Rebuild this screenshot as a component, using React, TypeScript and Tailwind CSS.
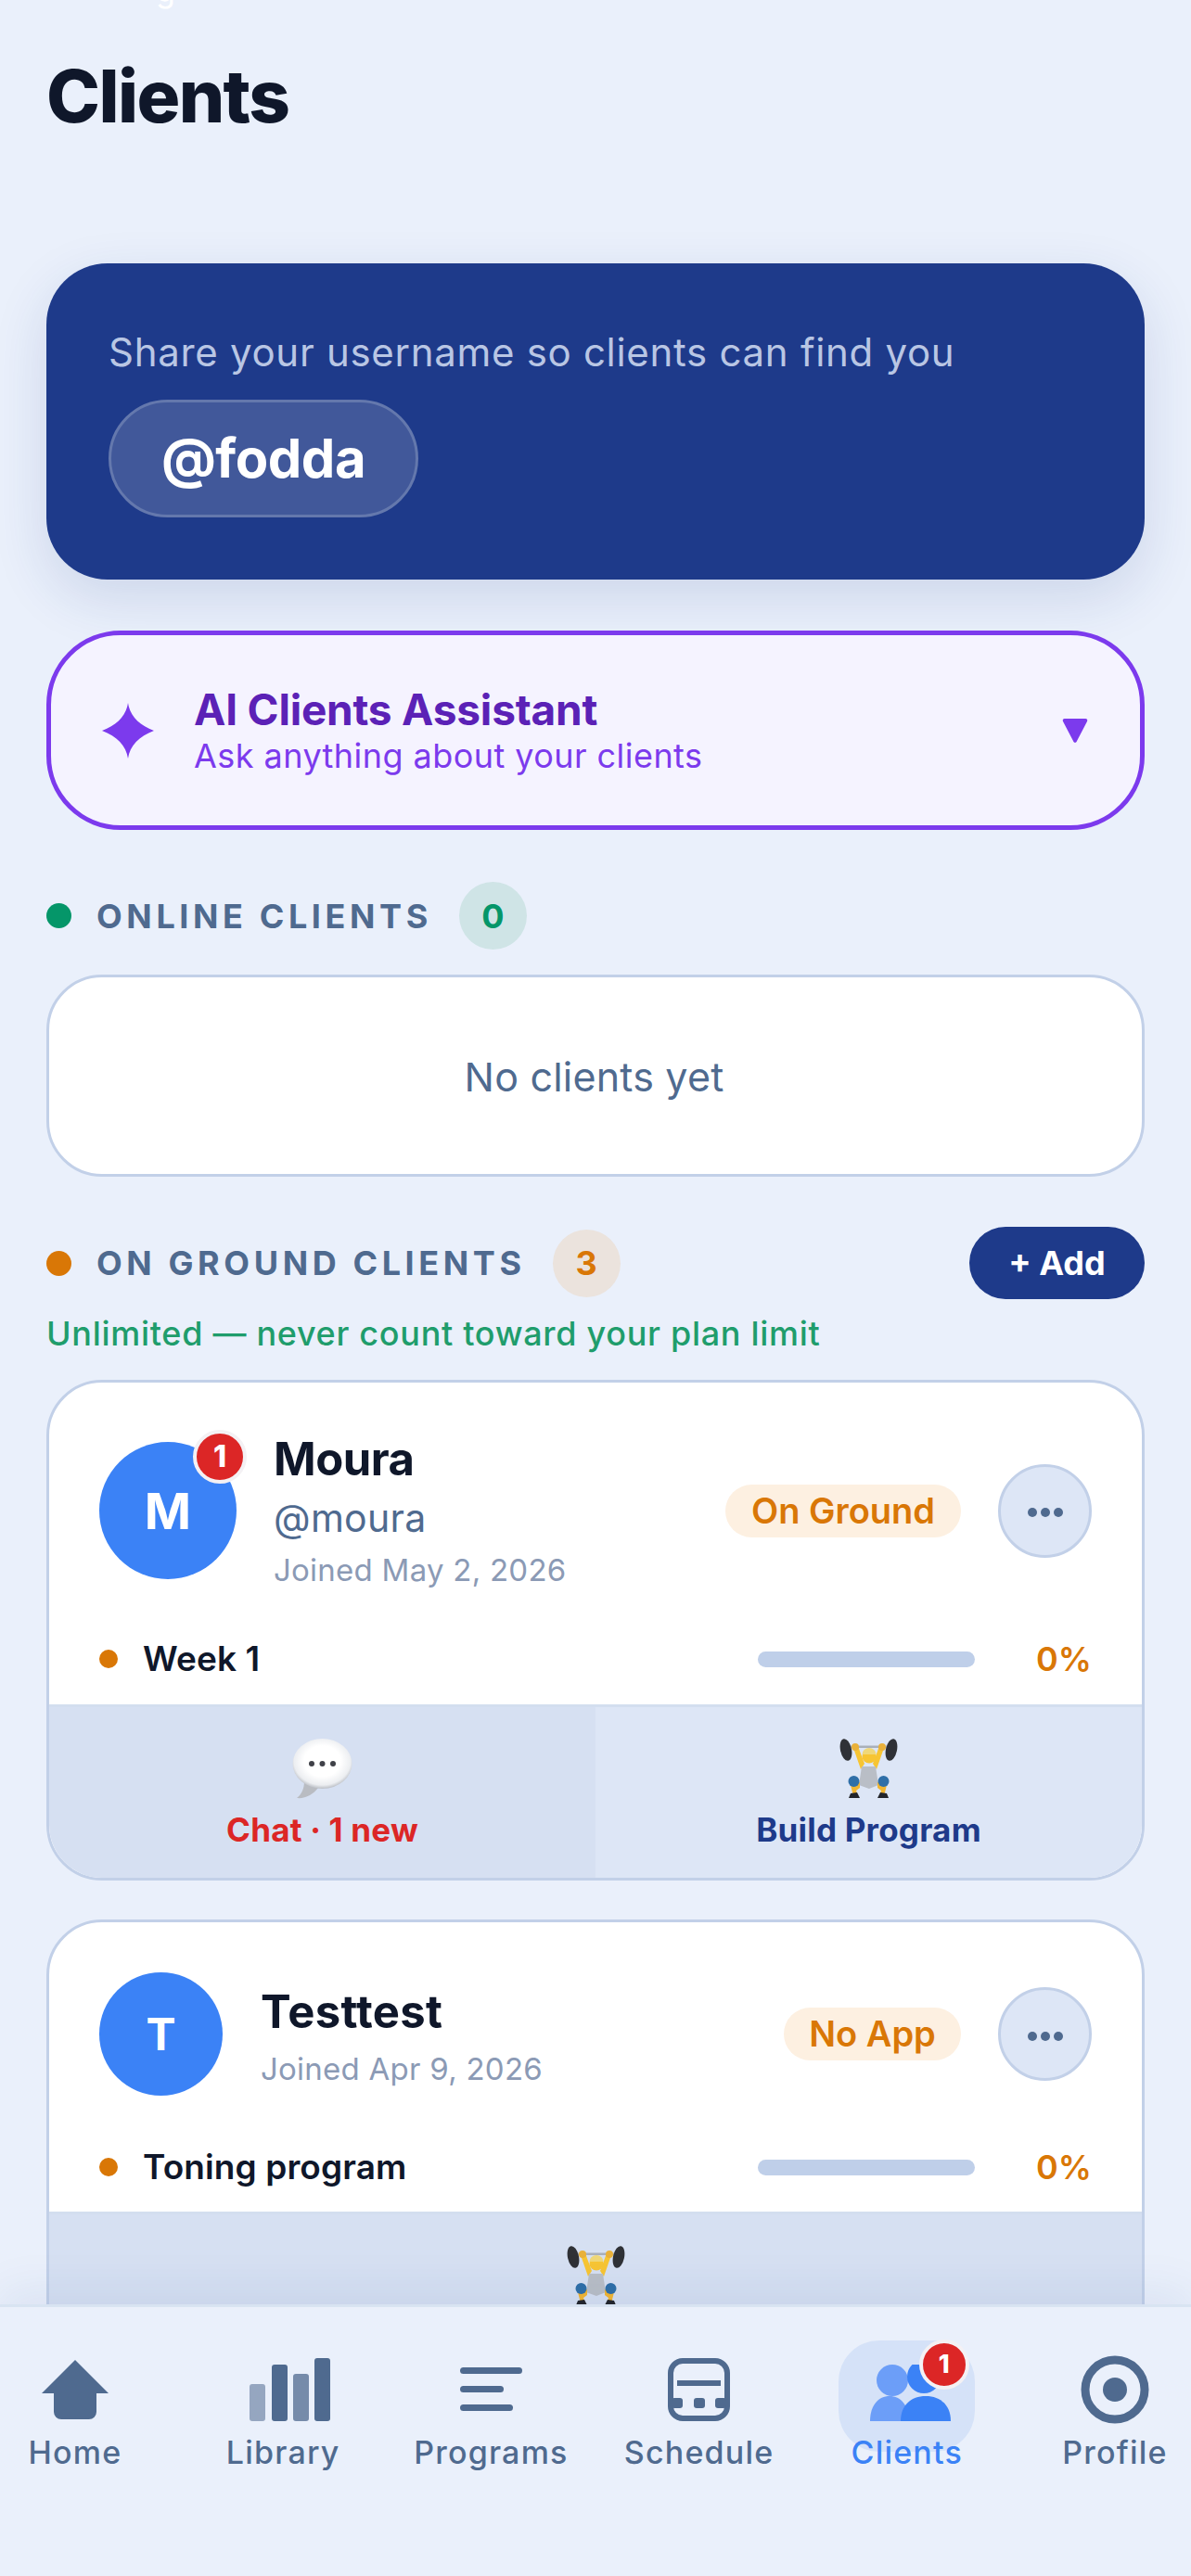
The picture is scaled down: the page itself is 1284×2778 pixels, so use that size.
import { ReactNode } from "react";

const font = "font-['Inter','Noto_Sans',sans-serif]";

function ChatEmoji() {
  return (
    <svg width="65" height="65" viewBox="0 0 65 65">
      <defs>
        <radialGradient id="bubble" cx="50%" cy="45%" r="56%">
          <stop offset="0.55" stopColor="#ffffff" />
          <stop offset="0.85" stopColor="#eceef1" />
          <stop offset="1" stopColor="#b4b8bf" />
        </radialGradient>
      </defs>
      <path d="M13 46 C13 54 10 60 5 64 C14 65 23 60 28 53 Z" fill="#b9bcc2" />
      <ellipse cx="32.5" cy="27" rx="32" ry="27" fill="url(#bubble)" />
      <circle cx="21" cy="27" r="3" fill="#3f4148" />
      <circle cx="32.5" cy="27" r="3" fill="#3f4148" />
      <circle cx="44" cy="27" r="3" fill="#3f4148" />
    </svg>
  );
}

function LifterEmoji() {
  return (
    <svg width="63" height="65" viewBox="0 0 63 65">
      <rect x="8" y="7.5" width="47" height="2.5" fill="#a9b0ba" />
      <ellipse cx="7" cy="12" rx="6" ry="12" transform="rotate(-12 7 12)" fill="#2f3136" />
      <ellipse cx="56" cy="12" rx="6" ry="12" transform="rotate(12 56 12)" fill="#2f3136" />
      <path d="M15 10 L23 33 L27 27 L20 8 Z" fill="#f7c533" />
      <path d="M48 10 L40 33 L36 27 L43 8 Z" fill="#f7c533" />
      <circle cx="17" cy="9" r="4" fill="#e9b13a" />
      <circle cx="46" cy="9" r="4" fill="#e9b13a" />
      <path d="M24 30 H39 L42 50 L32 54 L21 50 Z" fill="#b9bec6" />
      <circle cx="32" cy="19" r="7.5" fill="#f7c533" />
      <path d="M24.5 17 a7.5 7 0 0 1 15 0 Z" fill="#f0d878" />
      <path d="M12 50 L22 47 L22 53 L18 56 L20 62 L15 62 Z" fill="#f2b632" />
      <path d="M51 50 L41 47 L41 53 L45 56 L43 62 L48 62 Z" fill="#f2b632" />
      <circle cx="15.5" cy="46" r="6" fill="#2f6fa8" />
      <circle cx="47.5" cy="46" r="6" fill="#2f6fa8" />
      <path d="M12 59 L19 58 L22 64 H10 Z" fill="#23252a" />
      <path d="M51 59 L44 58 L41 64 H53 Z" fill="#23252a" />
    </svg>
  );
}

function Badge({ className }: { className: string }) {
  return (
    <div
      className={`flex items-center justify-center rounded-full border-[4px] border-[#f4f1f4] bg-[#dc2626] font-extrabold text-white ${className}`}
    >
      1
    </div>
  );
}

function Dots() {
  return (
    <div className="flex h-[101px] w-[101px] shrink-0 items-center justify-center gap-[4px] rounded-full border-[3px] border-[#c2d0e8] bg-[#dde6f6] pt-[4px]">
      <span className="h-[10px] w-[10px] rounded-full bg-[#4f6a8f]" />
      <span className="h-[10px] w-[10px] rounded-full bg-[#4f6a8f]" />
      <span className="h-[10px] w-[10px] rounded-full bg-[#4f6a8f]" />
    </div>
  );
}

function ProgramRow({ label }: { label: string }) {
  return (
    <div className="flex items-center">
      <span className="h-[20px] w-[20px] rounded-full bg-[#d97706]" />
      <span className="ml-[27px] flex-1 text-[37px] leading-[44px] font-semibold tracking-[0.1px] text-[#0f172a]">{label}</span>
      <span className="-ml-[1px] h-[17px] w-[234px] rounded-full bg-[#bfcfe9]" />
      <span className="w-[126px] text-right text-[36px] leading-[44px] font-semibold text-[#d97706]">0%</span>
    </div>
  );
}

function Action({ icon, label, className }: { icon: ReactNode; label: string; className: string }) {
  return (
    <div className={`flex flex-1 flex-col items-center pt-[34px] ${className}`}>
      {icon}
      <span className="mt-[11px] text-[35px] leading-[44px] font-bold tracking-[0.2px]">{label}</span>
    </div>
  );
}

function NavItem({ icon, label, active }: { icon: ReactNode; label: string; active?: boolean }) {
  return (
    <div className="relative flex w-[170px] flex-col items-center">
      <div className="flex h-[74px] items-center justify-center">{icon}</div>
      <span
        className={`mt-[11px] text-[34px] leading-[40px] font-medium tracking-[1.2px] ${active ? "text-[#3b82f6]" : "text-[#4f6a8f]"}`}
      >
        {label}
      </span>
    </div>
  );
}

export default function App() {
  return (
    <div className={`relative h-[2778px] w-[1284px] overflow-hidden bg-[#eaf0fb] ${font}`}>
      {/* bit of the status text that scrolled off the top */}
      <span className="absolute -top-[27px] left-[168px] text-[34px] leading-[34px] text-white">g</span>

      <main className="px-[50px] pt-[68px]">
        <h1 className="text-[78px] leading-[72px] font-extrabold tracking-[-1.6px] text-[#0f172a]">Clients</h1>

        <section className="mt-[144px] h-[341px] rounded-[66px] bg-[#1e3a8a] pt-[72px] pl-[67px] shadow-[0_20px_60px_rgba(30,58,138,0.14)]">
          <p className="text-[42px] leading-[48px] font-normal tracking-[0.7px] text-[#b9c6e4]">Share your username so clients can find you</p>
          <div className="mt-[27px] flex h-[127px] w-[334px] items-center justify-center rounded-full border-[3px] border-[#6478ad] bg-[#41589a] text-[58px] font-bold tracking-[-0.5px] text-white">
            @fodda
          </div>
        </section>

        <section className="mt-[55px] flex h-[215px] items-center rounded-[80px] border-[5px] border-[#7c3aed] bg-[#f5f3ff] pr-[56px] pl-[55px]">
          <svg width="56" height="60" viewBox="0 0 56 60" className="shrink-0">
            <path d="M28 0 C30 14 40 24 56 30 C40 36 30 46 28 60 C26 46 16 36 0 30 C16 24 26 14 28 0 Z" fill="#7c3aed" />
          </svg>
          <div className="ml-[43px] flex-1">
            <p className="text-[46px] leading-[54px] font-bold tracking-[-0.2px] text-[#5b21b6]">AI Clients Assistant</p>
            <p className="text-[36px] leading-[46px] tracking-[0.45px] text-[#7c3aed]">Ask anything about your clients</p>
          </div>
          <svg width="28" height="28" viewBox="0 0 28 28">
            <path d="M3 1 H25 a2 2 0 0 1 2 3 L15.5 26 a2 2 0 0 1 -3 0 L1 4 a2 2 0 0 1 2 -3 Z" fill="#7c3aed" />
          </svg>
        </section>

        <section className="mt-[55px]">
          <div className="flex h-[75px] items-center">
            <span className="h-[27px] w-[27px] rounded-full bg-[#059669]" />
            <span className="ml-[27px] text-[36px] font-bold tracking-[4.6px] text-[#4f6a8f]">ONLINE CLIENTS</span>
            <span className="ml-[29px] flex h-[73px] w-[73px] items-center justify-center rounded-full bg-[#cfe4e6] text-[36px] font-bold text-[#059669]">
              0
            </span>
          </div>
          <div className="mt-[26px] flex h-[218px] items-center justify-center rounded-[60px] border-[3px] border-[#c2d0e8] bg-white pt-[2px] pr-[3px] text-[43px] font-normal tracking-[0.2px] text-[#4f6a8f]">
            No clients yet
          </div>
        </section>

        <section className="mt-[54px]">
          <div className="flex h-[78px] items-center">
            <span className="h-[27px] w-[27px] rounded-full bg-[#d97706]" />
            <span className="ml-[27px] text-[36px] font-bold tracking-[4.6px] text-[#4f6a8f]">ON GROUND CLIENTS</span>
            <span className="ml-[29px] flex h-[73px] w-[73px] items-center justify-center rounded-full bg-[#ebe3dd] text-[36px] font-bold text-[#d97706]">
              3
            </span>
            <button className="ml-auto flex h-[78px] w-[189px] items-center justify-center rounded-full bg-[#1e3a8a] text-[36px] font-bold text-white">
              + Add
            </button>
          </div>
          <p className="mt-[13px] text-[36px] leading-[48px] font-medium tracking-[0.7px] text-[#1f9d6c]">Unlimited — never count toward your plan limit</p>

          <article className="mt-[26px] overflow-hidden rounded-[60px] border-[3px] border-[#c2d0e8] bg-white">
            <div className="h-[347px] px-[54px] pt-[64px]">
              <div className="flex h-[148px] items-center">
                <div className="relative flex h-[148px] w-[148px] shrink-0 items-center justify-center rounded-full bg-[#3b82f6] text-[54px] font-bold text-white">
                  M
                  <Badge className="absolute -top-[13px] -right-[11px] h-[58px] w-[58px] text-[32px]" />
                </div>
                <div className="ml-[40px] flex-1">
                  <p className="text-[49px] leading-[60px] font-bold tracking-[-0.5px] text-[#0f172a]">Moura</p>
                  <p className="mt-[8px] text-[41px] leading-[50px] tracking-[0.3px] text-[#4f6a8f]">@moura</p>
                  <p className="mt-[10px] text-[33px] leading-[42px] tracking-[0.25px] text-[#8b9ab5]">Joined May 2, 2026</p>
                </div>
                <span className="flex h-[57px] w-[254px] items-center justify-center rounded-full bg-[#fdf0e1] text-[38px] font-semibold text-[#d97706]">
                  On Ground
                </span>
                <div className="ml-[40px]">
                  <Dots />
                </div>
              </div>
              <div className="mt-[64px]">
                <ProgramRow label="Week 1" />
              </div>
            </div>
            <div className="flex h-[187px] border-t-[3px] border-[#d3deef]">
              <Action icon={<ChatEmoji />} label="Chat · 1 new" className="bg-[#d6e0f2] text-[#dc2626]" />
              <Action icon={<LifterEmoji />} label="Build Program" className="bg-[#dde6f6] text-[#1e3a8a]" />
            </div>
          </article>

          <article className="mt-[42px] overflow-hidden rounded-[60px] border-[3px] border-[#c2d0e8] bg-white">
            <div className="h-[312px] px-[54px] pt-[54px]">
              <div className="flex h-[133px] items-center">
                <div className="flex h-[133px] w-[133px] shrink-0 items-center justify-center rounded-full bg-[#3b82f6] text-[48px] font-bold text-white">
                  T
                </div>
                <div className="ml-[41px] flex-1 pt-[5px]">
                  <p className="text-[49px] leading-[60px] font-bold tracking-[0.3px] text-[#0f172a]">Testtest</p>
                  <p className="mt-[10px] text-[33px] leading-[42px] tracking-[0.25px] text-[#8b9ab5]">Joined Apr 9, 2026</p>
                </div>
                <span className="flex h-[57px] w-[191px] items-center justify-center rounded-full bg-[#fdf0e1] text-[38px] font-semibold text-[#d97706]">
                  No App
                </span>
                <div className="ml-[40px]">
                  <Dots />
                </div>
              </div>
              <div className="mt-[55px]">
                <ProgramRow label="Toning program" />
              </div>
            </div>
            <div className="flex h-[187px] border-t-[3px] border-[#d3deef]">
              <Action icon={<LifterEmoji />} label="Build Program" className="bg-[#d6e0f2] text-[#1e3a8a]" />
            </div>
          </article>
        </section>
      </main>

      <nav className="absolute right-0 bottom-0 left-0 h-[293px] border-t-[3px] border-[#d8e4f2] bg-[#eaf0fb] shadow-[0_-12px_48px_rgba(30,58,138,0.08)]">
        <div className="-ml-[4px] flex w-[1291px] justify-between pt-[52px]">
          <NavItem
            label="Home"
            icon={
              <svg width="72" height="64" viewBox="0 0 72 64">
                <path d="M36 0 L72 36 H59 V56 a8 8 0 0 1 -8 8 H21 a8 8 0 0 1 -8 -8 V36 H0 Z" fill="#4f6a8f" />
              </svg>
            }
          />
          <NavItem
            label="Library"
            icon={
              <svg width="88" height="68" viewBox="0 0 88 68" className="ml-[16px]">
                <rect x="0" y="28" width="17" height="40" rx="3" fill="#4f6a8f" opacity="0.55" />
                <rect x="24" y="7" width="17" height="61" rx="3" fill="#4f6a8f" />
                <rect x="47" y="17" width="17" height="51" rx="3" fill="#4f6a8f" opacity="0.75" />
                <rect x="70" y="0" width="17" height="68" rx="3" fill="#4f6a8f" />
              </svg>
            }
          />
          <NavItem
            label="Programs"
            icon={
              <svg width="67" height="48" viewBox="0 0 67 48">
                <rect x="0" y="0" width="67" height="7" rx="3.5" fill="#4f6a8f" />
                <rect x="0" y="20" width="47" height="7" rx="3.5" fill="#4f6a8f" />
                <rect x="0" y="40" width="57" height="7" rx="3.5" fill="#4f6a8f" />
              </svg>
            }
          />
          <NavItem
            label="Schedule"
            icon={
              <svg width="67" height="68" viewBox="0 0 67 68">
                <rect x="3" y="3" width="61" height="62" rx="13" fill="none" stroke="#4f6a8f" strokeWidth="6" />
                <rect x="10" y="24" width="47" height="6" fill="#4f6a8f" />
                <rect x="4" y="43" width="12" height="11" rx="3" fill="#4f6a8f" />
                <rect x="28" y="43" width="12" height="11" rx="3" fill="#4f6a8f" />
                <rect x="51" y="43" width="12" height="11" rx="3" fill="#4f6a8f" />
              </svg>
            }
          />
          <div className="relative">
            <div className="absolute -top-[16px] left-[11px] h-[120px] w-[147px] rounded-[44px] bg-[#d5e2f8]" />
            <Badge className="absolute -top-[17px] left-[98px] z-10 h-[54px] w-[54px] text-[27px]" />
            <div className="relative">
              <NavItem
                label="Clients"
                active
                icon={
                  <svg width="88" height="61" viewBox="0 0 88 61" className="mt-[6px] ml-[8px]">
                    <circle cx="24" cy="17" r="17" fill="#6c9ef8" />
                    <path d="M0 61 C0 44 9 34 21 34 C33 34 42 44 42 61 Z" fill="#6c9ef8" />
                    <circle cx="58" cy="13" r="18" fill="#3b82f6" />
                    <path d="M33 61 C33 44 44 34 60 34 C76 34 87 44 87 61 Z" fill="#3b82f6" />
                  </svg>
                }
              />
            </div>
          </div>
          <NavItem
            label="Profile"
            icon={
              <svg width="74" height="74" viewBox="0 0 74 74">
                <circle cx="37" cy="37" r="32" fill="none" stroke="#4f6a8f" strokeWidth="9" />
                <circle cx="37" cy="37" r="13" fill="#4f6a8f" />
              </svg>
            }
          />
        </div>
      </nav>
    </div>
  );
}
